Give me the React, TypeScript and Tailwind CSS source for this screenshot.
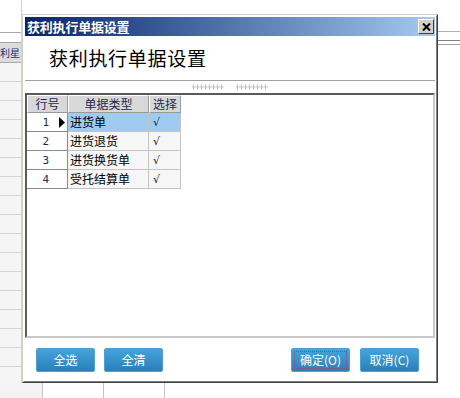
import React from "react";

const rows = [
  { n: "1", name: "进货单", sel: true },
  { n: "2", name: "进货退货", sel: false },
  { n: "3", name: "进货换货单", sel: false },
  { n: "4", name: "受托结算单", sel: false },
];

function Grip() {
  const xs = Array.from({ length: 8 }, (_, i) => i * 4 + 1);
  return (
    <svg width="32" height="6" viewBox="0 0 32 6">
      {xs.map((x) => (
        <line key={x} x1={x + 0.5} y1="0.5" x2={x + 0.5} y2="5.5" stroke="#b4b4b4" strokeWidth="1" />
      ))}
      <line x1="0" y1="3" x2="32" y2="3" stroke="#c8c8c8" strokeWidth="1" />
    </svg>
  );
}

function Btn({ label, focus }: { label: string; focus?: boolean }) {
  return (
    <div
      className={
        "w-[59px] h-[24px] rounded-[2px] border border-[#4f9fd0] bg-linear-to-b from-[#45a4da] to-[#2a7fba] flex items-center justify-center text-white text-[12px] leading-none " +
        (focus ? "outline-1 outline-dotted outline-[#6b5a86] -outline-offset-4" : "")
      }
    >
      {label}
    </div>
  );
}

export default function App() {
  const bgRows = Array.from({ length: 17 }, (_, i) => i);
  return (
    <div className="relative w-[460px] h-[398px] bg-white overflow-hidden flex flex-col font-['Noto_Sans_CJK_SC','Liberation_Sans',sans-serif]">
      {/* background spreadsheet */}
      <div className="h-[383px] flex">
        <div className="w-[22px] flex flex-col border-r border-[#d0d0d0] overflow-hidden">
          <div className="h-[32px] shrink-0" />
          <div className="h-[10px] shrink-0 border-t border-[#a8a8a8]" />
          <div className="h-[21px] shrink-0 bg-[#dcdcdc] border-t border-b border-[#a8a8a8] flex items-center overflow-hidden">
            <span className="text-[10px] text-[#1c2f6e] whitespace-nowrap leading-none">利星</span>
          </div>
          {bgRows.map((i) => (
            <div key={i} className="h-[19px] shrink-0 bg-[#f5f5f5] border-b border-[#d4d4d4]" />
          ))}
        </div>
        <div className="flex-1" />
        <div className="w-[22px] flex flex-col">
          <div className="h-[31px] shrink-0" />
          <div className="h-[9px] shrink-0 border-t border-[#b0b0b0]" />
          <div className="h-[4px] shrink-0 border-t border-[#808080]" />
          <div className="h-[1px] shrink-0 bg-[#a0a0a0]" />
        </div>
      </div>
      <div className="h-[15px] flex">
        <div className="w-[43px] bg-[#f3f3f3] border-r border-[#c4c4c4]" />
        <div className="w-[61px] border-r border-[#c4c4c4]" />
        <div className="w-[61px] border-r border-[#c4c4c4]" />
      </div>

      {/* dialog window */}
      <div className="absolute left-[22px] top-[14px] w-[416px] h-[369px] border border-t-[#d4d0c8] border-l-[#d4d0c8] border-r-[#404040] border-b-[#404040]">
        <div className="h-full border border-t-white border-l-white border-r-[#808080] border-b-[#808080] p-px bg-white flex flex-col">
          {/* title bar */}
          <div className="h-[19px] shrink-0 bg-linear-to-r from-[#0a246a] to-[#a6caf0] flex items-center justify-between pl-[2px] pr-[1px]">
            <span className="text-white font-bold text-[13px] leading-none tracking-[-0.2px]">获利执行单据设置</span>
            <div className="w-[16px] h-[15px] bg-[#d4d0c8] border border-t-white border-l-white border-r-[#404040] border-b-[#404040] flex items-center justify-center">
              <svg width="9" height="8" viewBox="0 0 9 8">
                <path d="M1 0.5 L8 7.5 M8 0.5 L1 7.5" stroke="#000" strokeWidth="2" />
              </svg>
            </div>
          </div>
          {/* header */}
          <div className="h-[44px] shrink-0 flex items-center pl-[24px] pb-[2px]">
            <span className="text-[19px] leading-none text-black tracking-[0.7px]">获利执行单据设置</span>
          </div>
          <div className="h-px shrink-0 bg-[#a0a0a0]" />
          {/* splitter */}
          <div className="h-[12px] shrink-0 flex items-center justify-center gap-[12px]">
            <Grip />
            <Grip />
          </div>
          {/* grid area */}
          <div className="h-[245px] shrink-0 border-t-2 border-l-2 border-t-[#5a5a5a] border-l-[#5a5a5a] border-r-2 border-b-2 border-r-[#c8c8c8] border-b-[#c8c8c8] bg-white">
            <div className="grid grid-cols-[41px_81px_32px] w-[154px] text-[12px] leading-none">
              <div className="h-[18px] bg-[#d8d8d8] border-t border-l border-white border-r border-b border-r-[#9a9a9a] border-b-[#9a9a9a] flex items-center justify-center text-[#1e2a50]">行号</div>
              <div className="h-[18px] bg-[#d8d8d8] border-t border-l border-white border-r border-b border-r-[#9a9a9a] border-b-[#9a9a9a] flex items-center justify-center text-[#1e2a50]">单据类型</div>
              <div className="h-[18px] bg-[#d8d8d8] border-t border-l border-white border-r border-b border-r-[#9a9a9a] border-b-[#9a9a9a] flex items-center justify-center text-[#1e2a50]">选择</div>
              {rows.map((r) => (
                <React.Fragment key={r.n}>
                  <div className="h-[19px] bg-white border-r border-b border-[#8a8a8a] flex items-center justify-end text-[11px] text-[#1c2a5c] font-['DejaVu_Sans_Mono',monospace]">
                    <span>{r.n}</span>
                    <span className="w-[18px] flex items-center pl-[10px]">
                      {r.sel && (
                        <svg width="6" height="11" viewBox="0 0 6 11">
                          <path d="M0 0 L6 5.5 L0 11 Z" fill="#000" />
                        </svg>
                      )}
                    </span>
                  </div>
                  <div className={"h-[19px] border-r border-b border-[#c4c4c4] flex items-center pl-[2px] text-black " + (r.sel ? "bg-[#9fcbf2]" : "bg-[#f6f6f6]")}>
                    {r.name}
                  </div>
                  <div className={"h-[19px] border-r border-b border-[#c4c4c4] flex items-center pl-[4px] text-[#1a1a3a] italic text-[11px] font-['DejaVu_Sans',sans-serif] " + (r.sel ? "bg-[#9fcbf2]" : "bg-[#f6f6f6]")}>
                    √
                  </div>
                </React.Fragment>
              ))}
            </div>
          </div>
          {/* footer */}
          <div className="flex-1 flex items-start justify-between pt-[10px] pl-[11px] pr-[16px]">
            <div className="flex gap-[9px]">
              <Btn label="全选" />
              <Btn label="全清" />
            </div>
            <div className="flex gap-[10px]">
              <Btn label="确定(O)" focus />
              <Btn label="取消(C)" />
            </div>
          </div>
        </div>
      </div>
    </div>
  );
}
